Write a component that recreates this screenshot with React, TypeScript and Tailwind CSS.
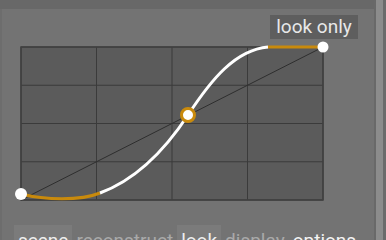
import React from "react";

const ORANGE = "#c98a0c";

function Curve() {
  const vx = [21, 96.5, 172, 247.5, 323];
  const hy = [47, 85.25, 123.5, 161.75, 200];
  return (
    <svg width={316} height={166} viewBox="14 40 316 166" className="block">
      <rect x={21} y={47} width={302} height={153} fill="#5b5b5b" />
      {vx.map((x, i) => (
        <line key={"v" + i} x1={x} y1={47} x2={x} y2={200} stroke="#3b3b3b" strokeWidth={1} />
      ))}
      {hy.map((y, i) => (
        <line key={"h" + i} x1={21} y1={y} x2={323} y2={y} stroke="#3b3b3b" strokeWidth={1} />
      ))}
      <rect x={21} y={47} width={302} height={153} fill="none" stroke="#404040" strokeWidth={1.5} />
      <line x1={21} y1={200} x2={323} y2={47} stroke="#2e2e2e" strokeWidth={1} />
      <path d="M21,194 C45,200 80,201 100,193" fill="none" stroke={ORANGE} strokeWidth={3} />
      <path d="M100,193 C135,180 165,150 188,115 C211,80 235,50 268,47" fill="none" stroke="#ffffff" strokeWidth={3} />
      <path d="M268,47 L323,47" fill="none" stroke={ORANGE} strokeWidth={3} />
      <circle cx={21} cy={194} r={6} fill="#ffffff" />
      <circle cx={323} cy={47} r={5.5} fill="#ffffff" />
      <circle cx={188} cy={115} r={6.5} fill="#ffffff" stroke={ORANGE} strokeWidth={3} />
    </svg>
  );
}

export default function App() {
  const font = { fontFamily: "Roboto, 'Open Sans', sans-serif" };
  return (
    <div className="w-[386px] h-[240px] overflow-hidden flex bg-[#737373]" style={font}>
      <div className="w-[374px] flex flex-col border-l-2 border-[#6d6d6d]">
        <div className="h-[9px] shrink-0 bg-[#686868] -ml-[2px]" />
        <div className="flex flex-col shrink-0 pl-[12px]">
          <div className="flex shrink-0 justify-end pr-[16px] pt-[6px]">
            <div className="h-[24px] w-[88px] bg-[#5e5e5e] text-[#e8e8e8] text-[19px] leading-[24px] text-center">
              look only
            </div>
          </div>
          <div className="mt-[1px] shrink-0">
            <Curve />
          </div>
          <div className="flex shrink-0 mt-[19px] text-[19px] leading-none">
            <div className="px-[4px] pt-[6px] h-[30px] bg-[#7b7b7b] text-[#eeeeee]">scene</div>
            <div className="px-[4px] pt-[6px] h-[30px] text-[#a9a9a9]">reconstruct</div>
            <div className="px-[4px] pt-[6px] h-[30px] bg-[#7b7b7b] text-[#eeeeee]">look</div>
            <div className="px-[4px] pt-[6px] h-[30px] text-[#a9a9a9]">display</div>
            <div className="px-[4px] pt-[6px] h-[30px] text-[#f4f4f4]">options</div>
          </div>
        </div>
      </div>
      <div className="w-[2px] bg-[#696969]" />
      <div className="w-[7px] bg-[#8c8c8c]" />
      <div className="w-[3px] bg-[#6b6b6b]" />
    </div>
  );
}
